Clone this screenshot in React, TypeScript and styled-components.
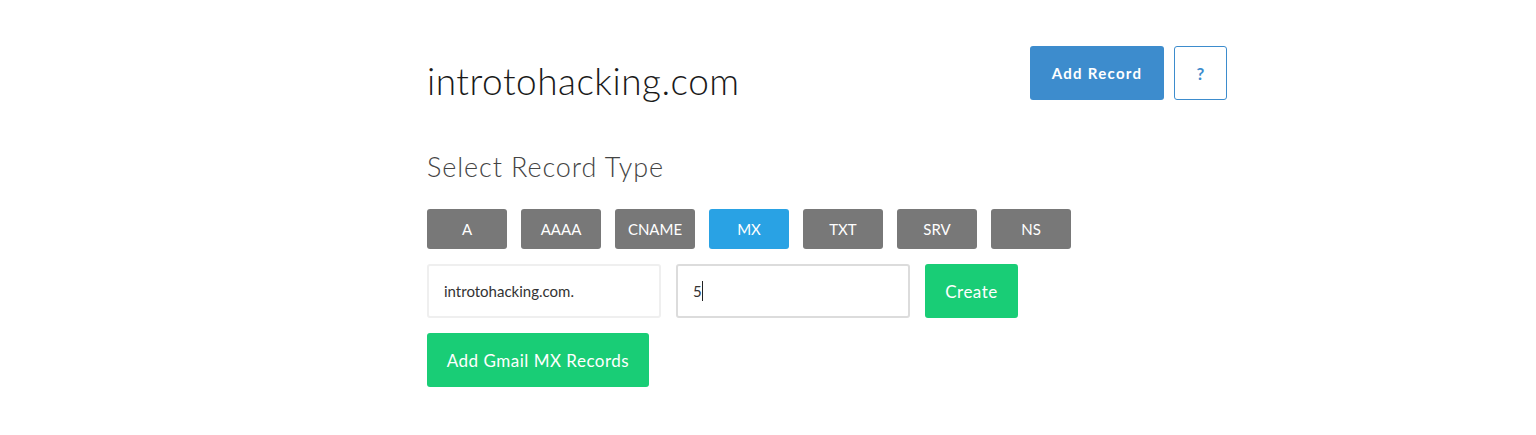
import React from "react";
import styled, { createGlobalStyle } from "styled-components";

const Global = createGlobalStyle`
  html, body { margin: 0; padding: 0; background: #fff; }
  body { font-family: Lato, "Open Sans", sans-serif; color: #222; }
  * { box-sizing: border-box; }
`;

const Page = styled.div`
  width: 1536px;
  height: 435px;
  background: #fff;
  padding-top: 46px;
`;

const Container = styled.div`
  margin-left: 427px;
  width: 800px;
`;

const Header = styled.div`
  display: flex;
  align-items: flex-start;
  justify-content: space-between;
`;

const Title = styled.h1`
  margin: 13px 0 0;
  font-size: 37px;
  font-weight: 300;
  color: #1a1a1a;
  letter-spacing: 0.5px;
  line-height: 44px;
`;

const HeaderActions = styled.div`
  display: flex;
  gap: 10px;
`;

const PrimaryButton = styled.button`
  height: 54px;
  width: 134px;
  border: none;
  border-radius: 3px;
  background: #3d8ccd;
  color: #fff;
  font-family: Lato, sans-serif;
  font-size: 15px;
  font-weight: 700;
  letter-spacing: 1.3px;
`;

const HelpButton = styled.button`
  height: 54px;
  width: 53px;
  border: 1px solid #3d8ccd;
  border-radius: 3px;
  background: #fff;
  color: #3d8ccd;
  font-family: Lato, sans-serif;
  font-size: 17px;
  font-weight: 700;
`;

const Subtitle = styled.h2`
  margin: 48px 0 0;
  font-size: 27px;
  font-weight: 300;
  color: #444;
  line-height: 32px;
  letter-spacing: 0.9px;
`;

const TypeRow = styled.div`
  display: flex;
  gap: 14px;
  margin-top: 26px;
`;

const TypeButton = styled.button<{ $active?: boolean }>`
  width: 80px;
  height: 40px;
  border: none;
  border-radius: 3px;
  background: ${(p) => (p.$active ? "#29a2e4" : "#787878")};
  color: #fff;
  font-family: Lato, sans-serif;
  font-size: 15px;
  font-weight: 400;
`;

const FormRow = styled.div`
  display: flex;
  gap: 15px;
  margin-top: 15px;
`;

const Input = styled.input`
  width: 234px;
  height: 54px;
  border: 2px solid #efefef;
  border-radius: 3px;
  padding: 0 15px;
  font-family: Lato, sans-serif;
  font-size: 15px;
  color: #333;
  outline: none;
  background: #fff;
`;

const FakeInput = styled.div`
  width: 234px;
  height: 54px;
  border: 2px solid #dcdcdc;
  border-radius: 3px;
  padding: 0 15px;
  display: flex;
  align-items: center;
  font-family: Lato, sans-serif;
  font-size: 15px;
  color: #333;
`;

const Caret = styled.span`
  display: inline-block;
  width: 1px;
  height: 20px;
  background: #222;
`;

const GreenButton = styled.button<{ $w: number }>`
  width: ${(p) => p.$w}px;
  height: 54px;
  border: none;
  border-radius: 3px;
  background: #19cd76;
  color: #fff;
  font-family: Lato, sans-serif;
  font-size: 17px;
  font-weight: 400;
  letter-spacing: 0.5px;
`;

const types = ["A", "AAAA", "CNAME", "MX", "TXT", "SRV", "NS"];

export default function App() {
  return (
    <Page>
      <Global />
      <Container>
        <Header>
          <Title>introtohacking.com</Title>
          <HeaderActions>
            <PrimaryButton>Add Record</PrimaryButton>
            <HelpButton>?</HelpButton>
          </HeaderActions>
        </Header>
        <Subtitle>Select Record Type</Subtitle>
        <TypeRow>
          {types.map((t) => (
            <TypeButton key={t} $active={t === "MX"}>
              {t}
            </TypeButton>
          ))}
        </TypeRow>
        <FormRow>
          <Input defaultValue="introtohacking.com." readOnly />
          <FakeInput>
            5<Caret />
          </FakeInput>
          <GreenButton $w={93}>Create</GreenButton>
        </FormRow>
        <FormRow>
          <GreenButton $w={222}>Add Gmail MX Records</GreenButton>
        </FormRow>
      </Container>
    </Page>
  );
}
